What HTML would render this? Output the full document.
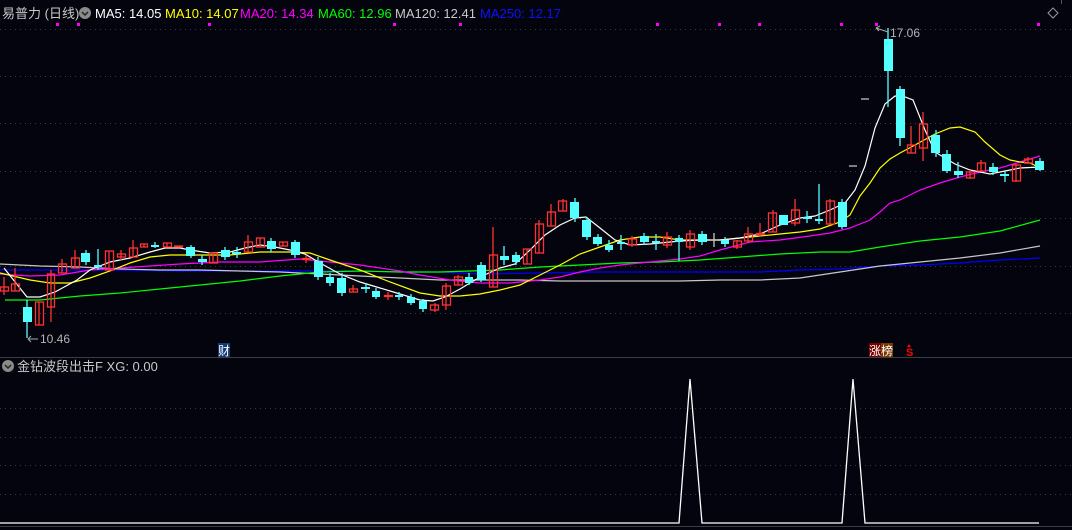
<!DOCTYPE html>
<html><head><meta charset="utf-8"><style>
html,body{margin:0;padding:0;background:#04040e;width:1072px;height:530px;overflow:hidden}
svg{display:block}
text{font-family:"Liberation Sans","Noto Sans CJK SC",sans-serif}
</style></head><body>
<svg width="1072" height="530" viewBox="0 0 1072 530" xmlns="http://www.w3.org/2000/svg">
<rect width="1072" height="530" fill="#04040e"/>
<g stroke="#3a3a3a" stroke-dasharray="1,4" stroke-width="1">
<line x1="0" y1="29.5" x2="1072" y2="29.5"/>
<line x1="0" y1="76.5" x2="1072" y2="76.5"/>
<line x1="0" y1="123.5" x2="1072" y2="123.5"/>
<line x1="0" y1="171.5" x2="1072" y2="171.5"/>
<line x1="0" y1="218.5" x2="1072" y2="218.5"/>
<line x1="0" y1="266.5" x2="1072" y2="266.5"/>
<line x1="0" y1="313.5" x2="1072" y2="313.5"/>
<line x1="0" y1="408.5" x2="1072" y2="408.5"/>
<line x1="0" y1="437.5" x2="1072" y2="437.5"/>
<line x1="0" y1="465.5" x2="1072" y2="465.5"/>
<line x1="0" y1="494.5" x2="1072" y2="494.5"/>
</g>
<line x1="0" y1="357.5" x2="1072" y2="357.5" stroke="#3c3c44"/>
<line x1="0" y1="526.5" x2="1072" y2="526.5" stroke="#3c3c44"/>
<line x1="1061.5" y1="0" x2="1061.5" y2="4" stroke="#555"/>
<!-- header -->
<text x="2" y="18" font-size="13" fill="#c8c8c8">易普力 (日线)</text>
<circle cx="85" cy="13" r="6" fill="#8a8a8a"/><path d="M82 12 L85 15 L88 12" stroke="#222" stroke-width="1.5" fill="none"/>
<text x="95" y="18" font-size="13" fill="#ffffff">MA5: 14.05</text>
<text x="165" y="18" font-size="13" fill="#ffff00">MA10: 14.07</text>
<text x="240" y="18" font-size="13" fill="#ff00ff">MA20: 14.34</text>
<text x="318" y="18" font-size="13" fill="#00ff00">MA60: 12.96</text>
<text x="395" y="18" font-size="13" fill="#c8c8c8">MA120: 12.41</text>
<text x="480" y="18" font-size="13" fill="#1010ff">MA250: 12.17</text>
<g fill="#ff00ff">
<rect x="56" y="23" width="3" height="3"/><rect x="77" y="23" width="3" height="3"/><rect x="208" y="23" width="3" height="3"/><rect x="393" y="23" width="3" height="3"/><rect x="459" y="23" width="3" height="3"/><rect x="656" y="23" width="3" height="3"/><rect x="718" y="23" width="3" height="3"/><rect x="758" y="23" width="3" height="3"/><rect x="840" y="23" width="3" height="3"/><rect x="875" y="23" width="3" height="3"/><rect x="1037" y="23" width="3" height="3"/>
</g>
<path d="M1053 8 L1058 13 L1053 18 L1048 13 Z" stroke="#999" fill="none"/>
<!-- MAs -->
<g fill="none" stroke-width="1.2">
<polyline stroke="#0000ff" points="0,270 60,270 120,270 180,271 240,271 300,271 360,271 400,272 440,272 480,274 540,273 600,272 640,272 680,272 720,272 760,272 800,270 840,269 880,266 920,265 960,263 1000,260 1040,258"/>
<polyline stroke="#c8c8c8" points="0,264 40,266 80,267 120,269 160,270 200,270 240,271 280,272 320,274 360,276 400,278 440,280 480,280 520,280 560,281 600,281 640,281 680,281 720,280 760,280 800,278 840,272 880,266 920,262 960,258 1000,253 1040,246"/>
<polyline stroke="#00ff00" points="5,300 40,300 80,296 120,293 160,289 200,285 240,281 280,276 320,272 360,271 400,272 440,272 470,271 500,270 540,267 580,265 620,263 660,262 700,260 740,257 780,254 820,252 850,252 880,247 920,241 960,237 1000,231 1040,220"/>
<polyline stroke="#ff00ff" points="0,274 30,276 60,275 90,270 120,268 150,266 180,264 220,262 260,262 300,259 330,262 360,265 380,268 400,271 420,275 450,280 480,283 510,283 540,280 560,277 580,272 600,268 620,265 650,262 680,259 700,256 720,250 750,242 780,240 810,236 830,233 850,228 870,220 880,212 890,203 900,200 920,190 940,183 960,177 980,172 1000,168 1020,162 1040,156"/>
<polyline stroke="#ffff00" points="0,273 30,280 50,283 70,283 90,278 110,271 130,263 150,257 170,255 200,255 230,255 260,252 290,252 310,253 330,260 360,270 390,282 420,293 440,296 460,296 480,294 500,290 520,285 540,275 560,265 580,254 600,247 620,240 640,237 660,237 680,240 700,240 720,240 740,238 760,236 780,234 800,232 820,229 840,222 850,215 860,196 870,183 880,168 890,159 900,153 915,145 935,134 950,128 960,127 975,132 985,142 1000,155 1010,160 1020,162 1030,163 1040,168"/>
<polyline stroke="#ffffff" points="4,268 27,297 40,297 55,292 77,280 90,270 110,262 130,258 150,252 165,248 180,248 190,250 210,253 230,252 245,248 260,245 275,247 290,250 305,254 320,263 340,274 360,282 380,288 400,294 420,300 433,301 445,297 460,289 480,277 500,268 515,264 530,250 545,235 560,225 575,218 586,217 600,228 615,240 630,245 650,244 680,241 700,240 720,240 740,238 760,234 780,225 800,218 815,216 830,210 845,203 855,190 865,166 875,128 885,104 895,96 905,97 913,100 925,130 935,152 945,158 955,164 970,170 990,174 1005,171 1020,168 1040,167"/>
</g>
<!-- candles: red hollow -->
<g stroke="#ff3232" fill="none" stroke-width="1.3">
<path d="M4 277V295M15 268V291M39 302V325M51 270V322M62 259V273M75 250V268M109 251V270M121 250V260M133 240V257M144 244V247M167 243V247M178 246V247M213 253V263M248 235V252M260 238V247M283 242V246M306 255V263M353 285V292M388 292V300M435 303V312M446 283V310M458 275V285M493 227V287M527 249V264M539 220V253M551 204V226M563 199V211M632 236V247M667 232V248M690 230V250M737 240V249M748 227V243M760 223V237M773 210V232M795 199V226M830 199V225M911 126V153M923 112V161M970 170V179M981 160V171M1016 164V182M1028 157V164"/>
<rect x="0.5" y="287" width="8" height="4"/><rect x="11.5" y="284" width="8" height="7"/><rect x="35.5" y="302" width="8" height="23"/><rect x="47.5" y="274" width="7" height="33"/><rect x="58.5" y="264" width="8" height="9"/><rect x="71.5" y="258" width="8" height="10"/><rect x="105.5" y="251" width="8" height="19"/><rect x="117.5" y="254" width="8" height="3"/><rect x="129.5" y="248" width="8" height="9"/><rect x="140.5" y="244" width="7" height="3"/><rect x="163.5" y="243" width="8" height="4"/><rect x="174.5" y="246" width="8" height="1"/><rect x="209.5" y="253" width="8" height="10"/><rect x="244.5" y="242" width="8" height="10"/><rect x="256.5" y="238" width="8" height="9"/><rect x="279.5" y="242" width="8" height="4"/><rect x="302.5" y="258.5" width="8" height="1"/><rect x="349.5" y="289" width="8" height="3"/><rect x="384.5" y="295.5" width="8" height="1"/><rect x="430.5" y="305" width="8" height="5"/><rect x="442.5" y="286" width="8" height="19"/><rect x="454.5" y="277" width="8" height="8"/><rect x="489.5" y="255" width="8" height="32"/><rect x="523.5" y="249" width="8" height="15"/><rect x="535.5" y="224" width="8" height="29"/><rect x="547.5" y="212" width="8" height="14"/><rect x="558.5" y="201" width="8" height="10"/><rect x="628.5" y="239" width="8" height="6"/><rect x="663.5" y="237" width="8" height="8"/><rect x="686.5" y="234" width="8" height="13"/><rect x="733.5" y="241" width="8" height="6"/><rect x="744.5" y="234" width="8" height="7"/><rect x="756.5" y="233.5" width="8" height="1"/><rect x="768.5" y="213" width="8" height="19"/><rect x="791.5" y="210" width="8" height="13"/><rect x="826.5" y="201" width="8" height="23"/><rect x="907.5" y="145" width="8" height="8"/><rect x="919.5" y="124" width="8" height="24"/><rect x="966.5" y="172" width="8" height="6"/><rect x="977.5" y="163" width="8" height="8"/><rect x="1012.5" y="165" width="8" height="16"/><rect x="1024.5" y="159" width="8" height="4"/>
</g>
<!-- cyan filled -->
<g stroke="#54ffff" stroke-width="1.3" fill="none">
<path d="M27 300V338M86 250V265M98 249V270M155 242V248M191 245V258M202 255V265M225 247V260M237 247V258M271 238V252M295 240V258M318 257V280M330 273V286M342 273V296M366 283V293M376 288V299M399 292V300M411 294V305M423 299V312M469 273V285M481 262V282M504 246V265M516 252V265M575 198V222M587 217V240M598 234V246M609 240V252M621 235V250M644 233V245M656 234V250M679 235V261M702 231V245M725 237V247M807 211V223M819 184V224M842 199V229M888 28V107M900 86V146M936 130V157M947 150V173M958 162V178M993 163V175M1005 171V182M1040 158V171"/>
</g>
<g fill="#54ffff">
<rect x="23" y="307" width="9" height="15"/><rect x="81" y="253" width="9" height="9"/><rect x="94" y="265" width="8" height="2"/><rect x="151" y="245" width="8" height="2"/><rect x="186" y="247" width="9" height="9"/><rect x="198" y="259" width="9" height="3"/><rect x="221" y="250" width="9" height="7"/><rect x="232" y="252" width="9" height="2"/><rect x="267" y="241" width="9" height="8"/><rect x="291" y="242" width="9" height="13"/><rect x="314" y="261" width="9" height="16"/><rect x="326" y="277" width="8" height="6"/><rect x="337" y="278" width="9" height="15"/><rect x="361" y="287" width="9" height="2"/><rect x="372" y="291" width="8" height="6"/><rect x="395" y="295" width="8" height="2"/><rect x="407" y="297" width="8" height="6"/><rect x="419" y="301" width="8" height="8"/><rect x="465" y="277" width="8" height="6"/><rect x="477" y="265" width="9" height="15"/><rect x="500" y="256" width="9" height="4"/><rect x="512" y="255" width="8" height="7"/><rect x="570" y="202" width="9" height="16"/><rect x="582" y="220" width="9" height="17"/><rect x="593" y="237" width="9" height="7"/><rect x="605" y="245" width="8" height="5"/><rect x="617" y="242" width="8" height="2"/><rect x="640" y="236" width="9" height="6"/><rect x="652" y="241" width="8" height="2"/><rect x="675" y="238" width="8" height="4"/><rect x="698" y="234" width="9" height="8"/><rect x="721" y="240" width="8" height="4"/><rect x="779" y="215" width="9" height="10"/><rect x="803" y="217" width="9" height="2"/><rect x="815" y="219" width="8" height="2"/><rect x="838" y="202" width="9" height="25"/><rect x="884" y="39" width="9" height="32"/><rect x="896" y="89" width="9" height="49"/><rect x="931" y="135" width="9" height="18"/><rect x="942" y="154" width="9" height="17"/><rect x="954" y="171" width="9" height="4"/><rect x="989" y="167" width="9" height="5"/><rect x="1000" y="174" width="9" height="2"/><rect x="1035" y="161" width="9" height="9"/>
</g>
<g stroke="#c8c8c8" stroke-width="1.3"><path d="M714 233V247M710 240H718M861 99H869M849 166H857"/></g>
<!-- labels -->
<path d="M876 28 L888 32 M876 28 L880 26 M876 28 L879 31" stroke="#aaa" fill="none"/>
<text x="890" y="37" font-size="12" fill="#b4b4b4">17.06</text>
<path d="M28 339 L38 339 M28 339 L31 336 M28 339 L31 342" stroke="#aaa" fill="none"/>
<text x="40" y="343" font-size="12" fill="#b4b4b4">10.46</text>
<rect x="218" y="343" width="12" height="14" fill="#123a74"/>
<text x="218" y="355" font-size="12" fill="#ffffff">财</text>
<rect x="869" y="343" width="12" height="14" fill="#7a0000"/><rect x="881" y="343" width="12" height="14" fill="#7a3a00"/>
<text x="869" y="355" font-size="12" fill="#ffffff">涨榜</text>
<text x="906" y="356" font-size="11" fill="#ff0000" font-weight="bold">S</text>
<path d="M909 344 L911 347 L907 347 Z" fill="#ff0000"/>
<!-- lower panel -->
<circle cx="8" cy="366" r="6" fill="#8a8a8a"/><path d="M5 365 L8 368 L11 365" stroke="#222" stroke-width="1.5" fill="none"/>
<text x="17" y="371" font-size="13" fill="#c8c8c8">金钻波段出击F XG: 0.00</text>
<polyline fill="none" stroke="#ffffff" stroke-width="1.3" points="0,523 679,523 690,379 702,523 842,523 853,379 865,523 1039,523"/>
</svg>
</body></html>
